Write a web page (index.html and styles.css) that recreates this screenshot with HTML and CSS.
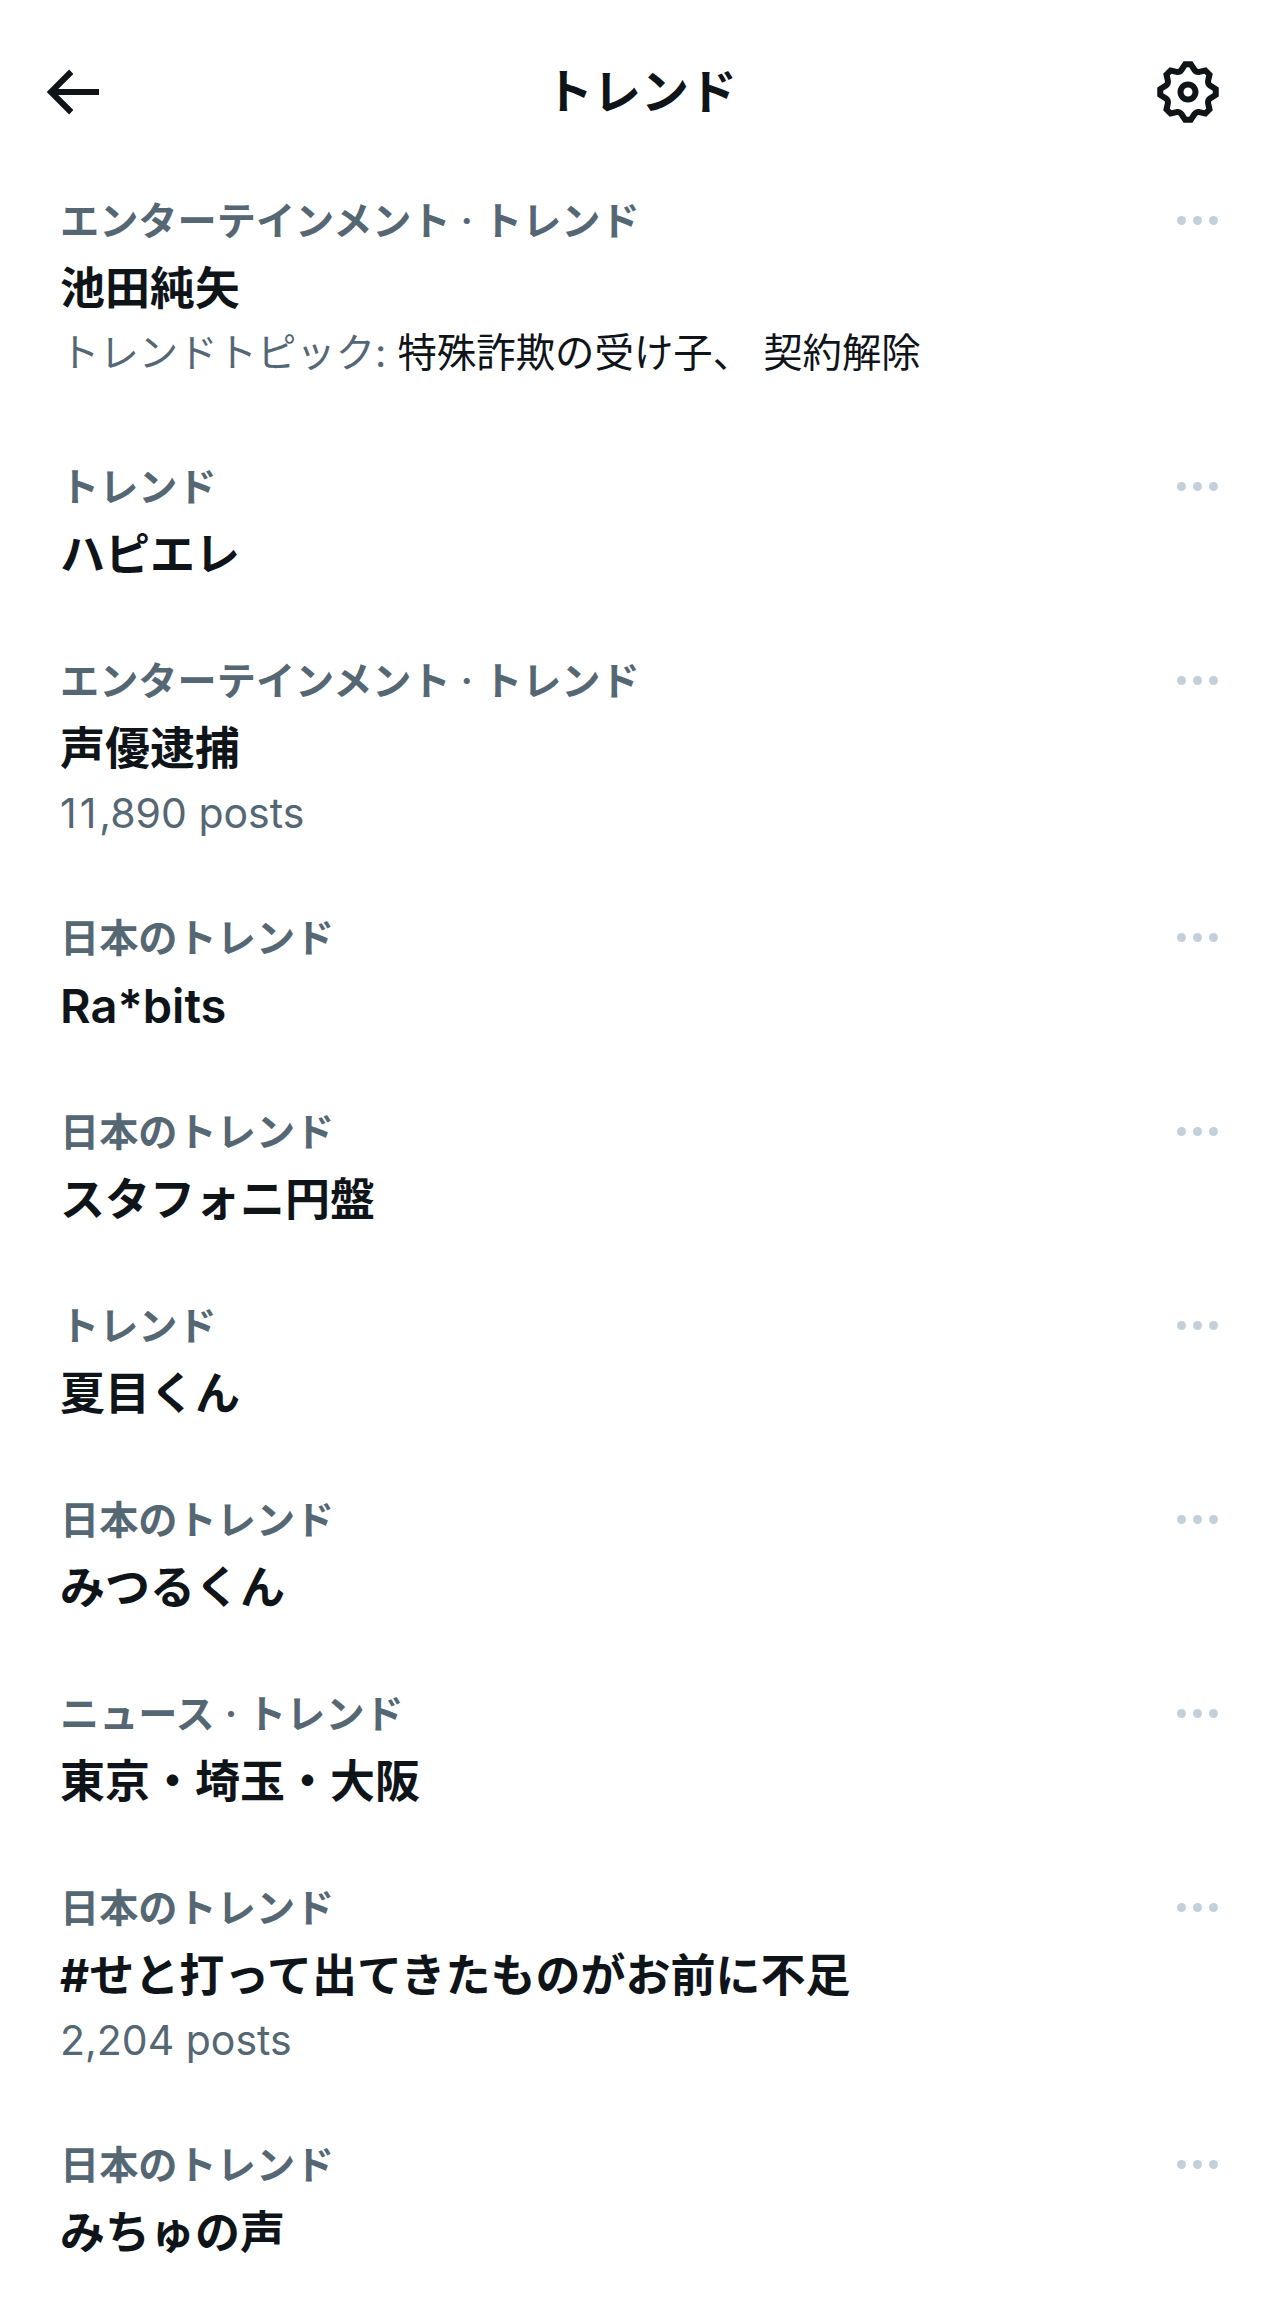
FILE: index.html
```html
<!DOCTYPE html>
<html lang="ja">
<head>
<meta charset="utf-8">
<title>トレンド</title>
<link rel="stylesheet" href="styles.css">
</head>
<body>
<div class="page">
  <header class="top">
    <svg class="icon" viewBox="0 0 24 24"><path d="M7.414 13l5.043 5.04-1.414 1.42L3.586 12l7.457-7.46 1.414 1.42L7.414 11H21v2H7.414z"/></svg>
    <h1 class="page-title">トレンド</h1>
    <svg class="icon" viewBox="0 0 24 24"><path d="M10.54 1.75h2.92l1.57 2.36c.11.17.32.25.53.21l2.53-.59 2.17 2.17-.58 2.54c-.05.2.04.41.21.53l2.36 1.57v2.92l-2.36 1.57c-.17.12-.26.33-.21.53l.58 2.54-2.17 2.17-2.53-.59c-.21-.04-.42.04-.53.21l-1.57 2.36h-2.92l-1.58-2.36c-.11-.17-.32-.25-.52-.21l-2.54.59-2.17-2.17.58-2.54c.05-.2-.03-.41-.21-.53l-2.35-1.57v-2.92L4.1 8.97c.18-.12.26-.33.21-.53L3.73 5.9 5.9 3.73l2.54.59c.2.04.41-.04.52-.21l1.58-2.36zm1.07 2l-.98 1.47C10.05 6.08 9 6.5 7.99 6.27l-1.46-.34-.6.6.33 1.46c.24 1.01-.18 2.07-1.05 2.64l-1.46.98v.78l1.46.98c.87.57 1.29 1.63 1.05 2.64l-.33 1.46.6.6 1.46-.34c1.01-.23 2.06.19 2.64 1.05l.98 1.47h.78l.97-1.47c.58-.86 1.63-1.28 2.65-1.05l1.45.34.61-.6-.34-1.46c-.23-1.01.18-2.07 1.05-2.64l1.47-.98v-.78l-1.47-.98c-.87-.57-1.28-1.63-1.05-2.64l.34-1.46-.61-.6-1.45.34c-1.02.23-2.07-.19-2.65-1.05l-.97-1.47h-.78zM12 10.5c-.83 0-1.5.67-1.5 1.5s.67 1.5 1.5 1.5c.82 0 1.5-.67 1.5-1.5s-.68-1.5-1.5-1.5zM8.5 12c0-1.93 1.56-3.5 3.5-3.5 1.93 0 3.5 1.57 3.5 3.5s-1.57 3.5-3.5 3.5c-1.94 0-3.5-1.57-3.5-3.5z"/></svg>
  </header>
  <main class="list">
    <article class="trend first">
      <div class="cat">エンターテインメント · トレンド</div>
      <div class="name">池田純矢</div>
      <div class="sub">トレンドトピック: <span class="dark">特殊詐欺の受け子、 契約解除</span></div>
      <div class="more"><i></i><i></i><i></i></div>
    </article>
    <article class="trend">
      <div class="cat">トレンド</div>
      <div class="name">ハピエレ</div>
      <div class="more"><i></i><i></i><i></i></div>
    </article>
    <article class="trend tall">
      <div class="cat">エンターテインメント · トレンド</div>
      <div class="name">声優逮捕</div>
      <div class="sub posts"><span class="ones">11</span>,890 posts</div>
      <div class="more"><i></i><i></i><i></i></div>
    </article>
    <article class="trend">
      <div class="cat">日本のトレンド</div>
      <div class="name latin">Ra*bits</div>
      <div class="more"><i></i><i></i><i></i></div>
    </article>
    <article class="trend">
      <div class="cat">日本のトレンド</div>
      <div class="name">スタフォニ円盤</div>
      <div class="more"><i></i><i></i><i></i></div>
    </article>
    <article class="trend">
      <div class="cat">トレンド</div>
      <div class="name">夏目くん</div>
      <div class="more"><i></i><i></i><i></i></div>
    </article>
    <article class="trend">
      <div class="cat">日本のトレンド</div>
      <div class="name">みつるくん</div>
      <div class="more"><i></i><i></i><i></i></div>
    </article>
    <article class="trend">
      <div class="cat">ニュース · トレンド</div>
      <div class="name">東京・埼玉・大阪</div>
      <div class="more"><i></i><i></i><i></i></div>
    </article>
    <article class="trend tall">
      <div class="cat">日本のトレンド</div>
      <div class="name">#せと打って出てきたものがお前に不足</div>
      <div class="sub posts">2,204 posts</div>
      <div class="more"><i></i><i></i><i></i></div>
    </article>
    <article class="trend">
      <div class="cat">日本のトレンド</div>
      <div class="name">みちゅの声</div>
      <div class="more"><i></i><i></i><i></i></div>
    </article>
  </main>
</div>
</body>
</html>
```
FILE: styles.css
```css
* { box-sizing: border-box; }
html, body { margin: 0; padding: 0; background: #fff; }
body {
  font-family: Inter, "Noto Sans CJK JP", sans-serif;
  color: #0f1419;
}
.page { width: 1284px; height: 2314px; overflow: hidden; }
.top {
  display: flex;
  justify-content: space-between;
  align-items: center;
  padding: 56px 60px 0 36px;
  height: 128px;
  position: relative;
}
.icon { width: 72px; height: 72px; fill: #0f1419; display: block; }
.page-title {
  margin: 0;
  font-size: 48px;
  font-weight: 700;
  line-height: 72px;
  position: absolute;
  left: 0;
  right: 2px;
  top: 56px;
  text-align: center;
}
.list { display: flex; flex-direction: column; }
.trend {
  position: relative;
  padding: 67px 120px 0 60px;
  height: 194px;
}
.trend.first { height: 266px; }
.trend.tall { height: 257px; }
.cat {
  font-size: 39.2px;
  font-weight: 600;
  line-height: 52px;
  color: #566774;
}
.name {
  font-size: 45px;
  font-weight: 700;
  line-height: 60px;
  margin-top: 12px;
}
.latin { font-size: 47px; font-weight: 600; }
.sub {
  font-size: 39.4px;
  line-height: 54px;
  color: #566774;
  margin-top: 7px;
}
.posts { font-size: 41px; }
.ones { letter-spacing: 3px; }
.dark { color: #0f1419; }
.more {
  position: absolute;
  right: 66px;
  top: 88px;
  display: flex;
  gap: 7px;
}
.more i {
  width: 9px;
  height: 9px;
  border-radius: 50%;
  background: #c4d0d9;
}
```
